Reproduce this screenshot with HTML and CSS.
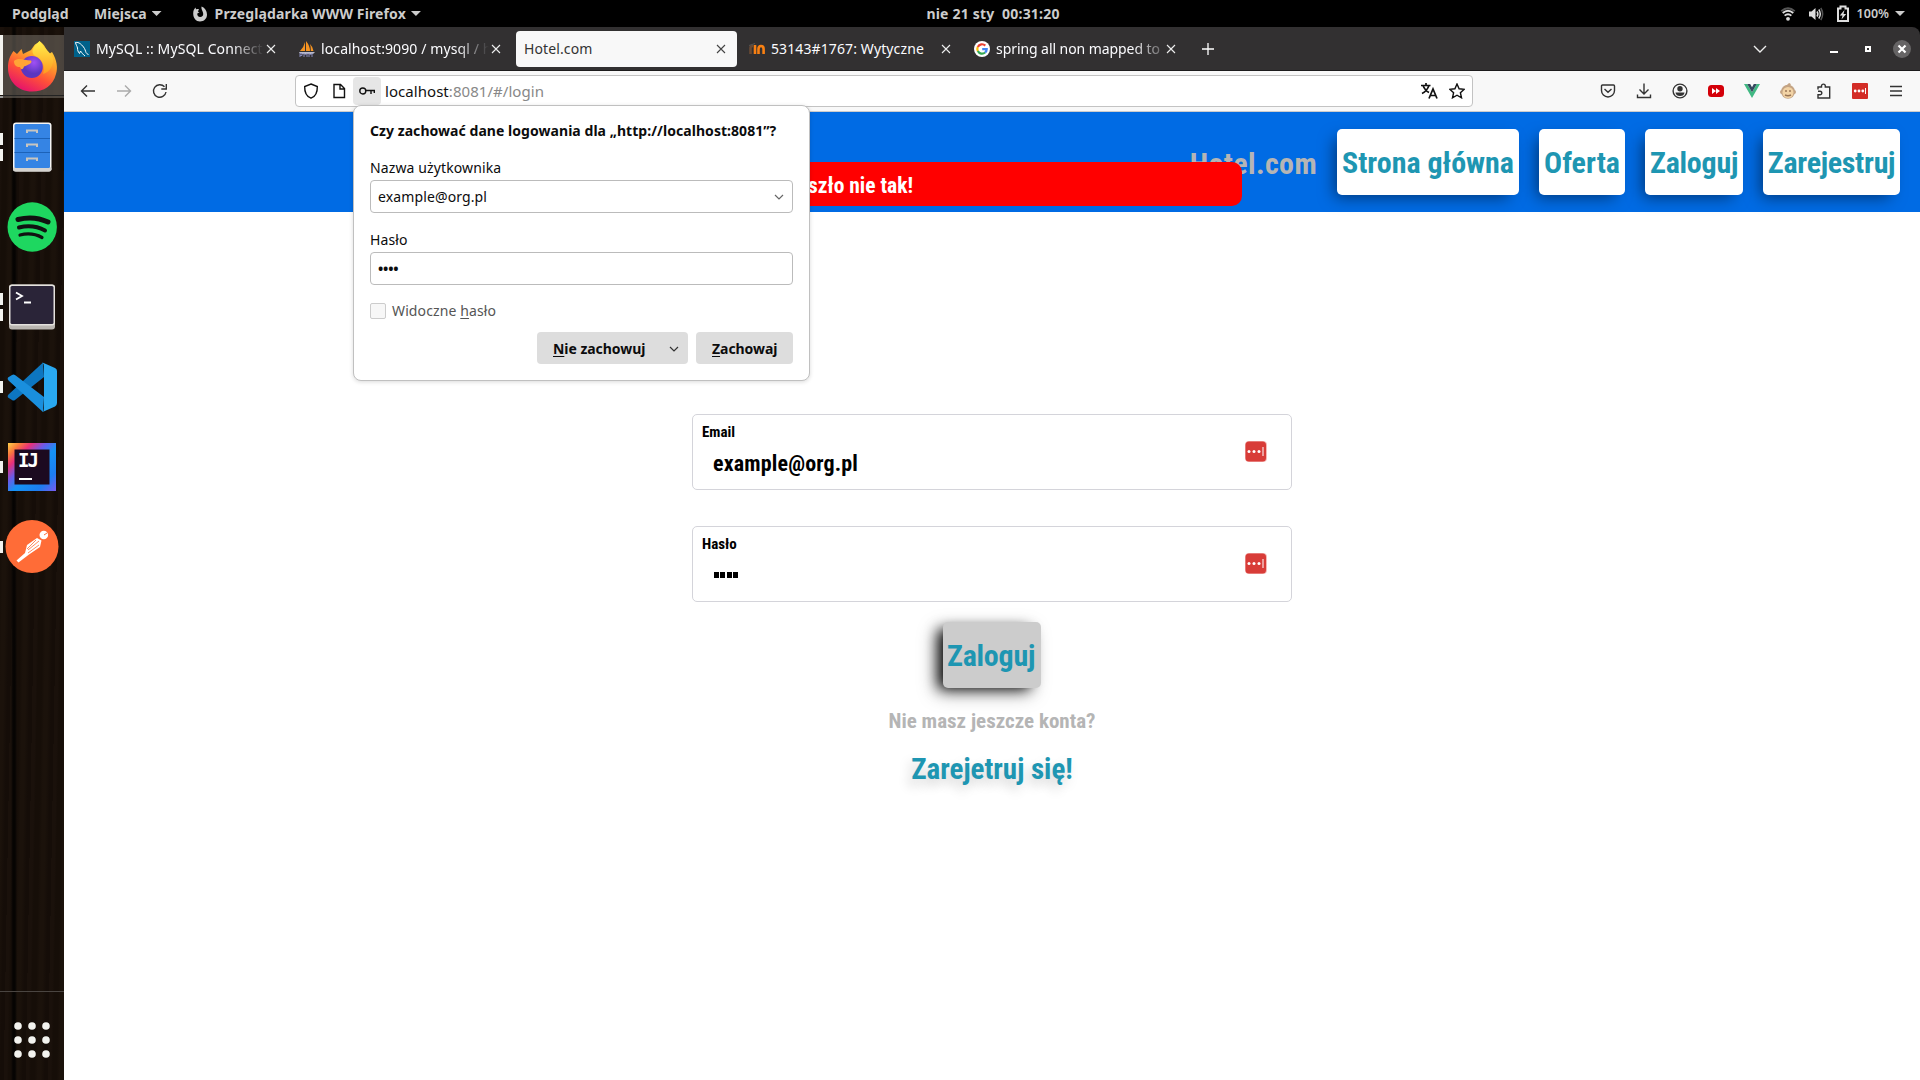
FILE: index.html
```
<!DOCTYPE html>
<html lang="pl">
<head>
<meta charset="utf-8">
<title>Hotel.com</title>
<link rel="stylesheet" href="styles.css">
</head>
<body>
<header class="topbar">
  <div class="topbar-left">
    <span class="activities">Podgląd</span>
    <span class="places">Miejsca</span><i class="tri"></i>
    <svg class="fx-mono" width="16" height="16" viewBox="0 0 16 16"><path d="M1.2 7.5C1.2 5 2 3 3.6 1.6L4 3.6C5 3 6 3 7 3.4L5.8 5.6L7.5 6.2L5.3 7.6C5 9.5 6.3 11 8.2 11C10.2 11 11.3 9.6 11.2 8C11.1 5 8.8 3.5 9.6.6C13 2 15 5 15 8.6C15 13 12 15.5 8 15.5C4 15.5 1.2 12 1.2 7.5Z" fill="#ccc"/></svg>
    <span class="app-name">Przeglądarka WWW Firefox</span><i class="tri"></i>
  </div>
  <div class="clock">nie 21 sty&nbsp; 00:31:20</div>
  <div class="topbar-right">
    <svg width="16" height="16" viewBox="0 0 16 16" fill="none" stroke="#ddd" stroke-width="1.8"><path d="M1.2 5.2Q8-.8 14.8 5.2" stroke="#555"/><path d="M2.7 7Q8 2.4 13.3 7M4.6 9.6Q8 6.8 11.4 9.6"/><circle cx="8" cy="12.8" r="1.9" fill="#ddd" stroke="none"/></svg>
    <svg width="16" height="16" viewBox="0 0 16 16" fill="none" stroke="#ddd" stroke-width="1.5"><path d="M1 5.5h2.5L7.5 2v12L3.500 10.500H1Z" fill="#ddd" stroke="none"/><path d="M9 5.500Q10.800 8 9 10.500M10.800 3.500Q13.800 8 10.800 12.500"/><path d="M12.800 2Q16.500 8 12.800 14" stroke="#555"/></svg>
    <svg width="14" height="18" viewBox="0 0 14 18"><path d="M2 3.500h2.500v-2h5v2H12V16H2Z" fill="none" stroke="#ddd" stroke-width="2"/><path d="M8.500 5L3.800 10.500H6.500L5.500 14.500L10.200 9H7.500Z" fill="#ddd"/></svg>
    <span class="percent">100%</span><i class="tri"></i>
  </div>
</header>

<div class="desktop">
  <aside class="dock">
    <svg width="64" height="80" viewBox="0 27 64 80">
      <defs>
        <linearGradient id="fxa" x1=".8" y1="0" x2=".3" y2="1"><stop offset="0" stop-color="#ffe23f"/><stop offset=".35" stop-color="#ffa22a"/><stop offset=".65" stop-color="#ff5138"/><stop offset="1" stop-color="#e4106e"/></linearGradient>
        <linearGradient id="fxb" x1="0" y1="0" x2="0" y2="1"><stop offset="0" stop-color="#fff14c"/><stop offset="1" stop-color="#ff9a1f"/></linearGradient>
        <radialGradient id="fxc" cx=".6" cy=".3"><stop offset="0" stop-color="#a050f5"/><stop offset="1" stop-color="#5a36c0"/></radialGradient>
      </defs>
      <rect x="3" y="35" width="61" height="63" fill="#807a72" opacity=".5"/>
      <rect x="3" y="95" width="61" height="1" fill="#222"/>
      <rect x="0" y="35" width="3" height="60" fill="#f3f3ef"/><rect x="0" y="96" width="3" height="2" fill="#999"/>
      <path d="M13.500 51L17 54L21.500 49L23 54L31 50L34.500 45C38 42 39 43 39.500 41C45 45 46 49 49 54L52 52C57 60 58 68 56 74C53 86 44 91.500 32 91.500C18 91.500 8 81 8 68C8 60 10 56 13.500 51Z" fill="url(#fxa)"/>
      <path d="M39.500 41C33 47 30 52 35 56C42 59 46 66 43 74C50 72 54 65 53 58C51 53 44 48 39.500 41Z" fill="url(#fxb)"/>
      <circle cx="31.800" cy="67" r="11" fill="url(#fxc)"/>
      <path d="M14 61C18 57 24 60 31 60.500C33 63 28 65 24 66.500C23 70 21 70 20 67C16 67 14 65 14 61Z" fill="#ffa436"/>
    </svg>
    <svg width="64" height="80" viewBox="0 107 64 80">
      <path d="M0 133h3v12H0ZM0 149h3v12H0Z" fill="#f3f3ef"/>
      <rect x="13" y="122.500" width="38.500" height="49" rx="3" fill="#f6f5f4"/><rect x="13" y="167" width="38.500" height="4.500" rx="2" fill="#d5d3d0"/>
      <rect x="14.500" y="124" width="35.500" height="44" rx="1.500" fill="#3584e4"/>
      <path d="M14.500 138.500h35.500M14.500 152.500h35.500" stroke="#1c62b8"/>
      <path d="M27 133v-2.500h10v2.500M27 147v-2.500h10v2.500M27 161v-2.500h10v2.500" fill="none" stroke="#c8c5c0" stroke-width="2"/>
    </svg>
    <svg width="64" height="80" viewBox="0 187 64 80">
      <circle cx="32.200" cy="227" r="24.700" fill="#1ed760"/>
      <g fill="none" stroke="#111" stroke-linecap="round"><path d="M18 219.500Q34 215.500 48 222" stroke-width="5"/><path d="M19 227.500Q33 224 45 230.500" stroke-width="4"/><path d="M20 235Q32 232 42 237.500" stroke-width="3.200"/></g>
    </svg>
    <svg width="64" height="80" viewBox="0 267 64 80">
      <path d="M0 293h3v12H0ZM0 309h3v12H0Z" fill="#f3f3ef"/>
      <rect x="9" y="284.500" width="46" height="45" rx="3" fill="#b9b5b0"/><rect x="9" y="284.500" width="46" height="41" rx="3" fill="#e4e1dd"/>
      <rect x="10.500" y="286" width="43" height="38" rx="1.500" fill="#2a2438"/>
      <path d="M16 292.500L22 296L16 299.500M24 302.500H31" fill="none" stroke="#fff" stroke-width="1.800"/>
    </svg>
    <svg width="64" height="80" viewBox="0 347 64 80">
      <path d="M0 381h3v12H0Z" fill="#f3f3ef"/>
      <path d="M8 397.500Q7 396 8.500 394.500L43 362.500L44 377L15 400Q13.500 401 12 400Z" fill="#0d76c0"/>
      <path d="M8 377.500Q7 379 8.500 380.500L43 412L44 397L15 375Q13.500 374 12 375Z" fill="#1a8fdd"/>
      <path d="M42.500 362.500L55 368Q57 369 57 371V403Q57 405 55 406.500L42.500 412Q44 411 44 408V366.500Q44 364 42.500 362.500Z" fill="#29a8f0"/>
    </svg>
    <svg width="64" height="80" viewBox="0 427 64 80">
      <defs><linearGradient id="ija" x1="0" y1="0" x2="1" y2="1"><stop offset="0" stop-color="#ffd24a"/><stop offset=".13" stop-color="#fa7a3c"/><stop offset=".25" stop-color="#e8307a"/><stop offset=".4" stop-color="#6a5be8"/><stop offset=".55" stop-color="#1593f5"/><stop offset=".8" stop-color="#1d7df0"/><stop offset="1" stop-color="#7a5af0"/></linearGradient></defs>
      <path d="M0 461h3v12H0Z" fill="#f3f3ef"/>
      <rect x="8" y="443" width="48" height="48" fill="url(#ija)"/><rect x="14.500" y="449.500" width="35" height="35" fill="#1c0a20"/>
      <text x="18" y="467" class="ij">IJ</text><rect x="19" y="478" width="13" height="2" fill="#fff"/>
    </svg>
    <svg width="64" height="80" viewBox="0 507 64 80">
      <path d="M0 541h3v12H0Z" fill="#f3f3ef"/>
      <circle cx="32" cy="546.500" r="26.500" fill="#ff6c37"/>
      <circle cx="43.800" cy="535" r="4.300" fill="#fff"/><path d="M44 535l3-2" stroke="#ff6c37"/>
      <path d="M37 538L41.500 540.500L40 547L29 554.500L18.500 562.500L16.500 560.500L25 553L27 545Z" fill="#fff"/><path d="M39 541L28 550M39 545L28 553M36 540L27 549" stroke="#ff6c37" stroke-width=".8"/>
    </svg>
    <svg class="apps" width="64" height="89" viewBox="0 991 64 89">
      <path d="M0 991.500H64" stroke="#4a4541"/>
      <g fill="#f3f3ef"><circle cx="18" cy="1026" r="3.800"/><circle cx="32" cy="1026" r="3.800"/><circle cx="46" cy="1026" r="3.800"/><circle cx="18" cy="1040" r="3.800"/><circle cx="32" cy="1040" r="3.800"/><circle cx="46" cy="1040" r="3.800"/><circle cx="18" cy="1054" r="3.800"/><circle cx="32" cy="1054" r="3.800"/><circle cx="46" cy="1054" r="3.800"/></g>
    </svg>
  </aside>

  <div class="window">
    <div class="tabstrip">
      <div class="tab">
        <svg width="16" height="16" viewBox="0 0 16 16"><rect width="16" height="16" fill="#00618a"/><path d="M1.500 1.500C5 1 7 3 9.500 6C11 8 11.500 10 12 11.500L14.500 14M1.500 1.500C2 4 3 5 3.500 7C3.500 9 4 11 5.500 12.500L6.500 10C8 12 9 13.500 11 15" fill="none" stroke="#fff"/></svg>
        <span class="tab-title fade">MySQL :: MySQL Connector</span>
        <svg class="x" viewBox="0 0 10 10"><path d="M1 1L9 9M9 1L1 9"/></svg>
      </div>
      <div class="tab">
        <svg width="16" height="16" viewBox="0 0 16 16"><path d="M6 1V10H1Q5 6 6 1ZM7 0Q11 5 11 10H7ZM11 3Q14 6 14.500 10H11.800Q12 6 11 3Z" fill="#f79421"/><path d="M0 11H16L14 13H1Z" fill="#b9b9c9"/><path d="M1 16V12.500H3V14.500H1M5 16V12.500L6.500 14L8 12.500V16M10 16V12.500L11.500 14L13 12.500V16" fill="none" stroke="#8587b8"/></svg>
        <span class="tab-title fade">localhost:9090 / mysql / hotel</span>
        <svg class="x" viewBox="0 0 10 10"><path d="M1 1L9 9M9 1L1 9"/></svg>
      </div>
      <div class="tab active">
        <span class="tab-title">Hotel.com</span>
        <svg class="x" viewBox="0 0 10 10"><path d="M1 1L9 9M9 1L1 9"/></svg>
      </div>
      <div class="tab">
        <svg width="16" height="16" viewBox="0 0 16 16" fill="none" stroke="#f98012" stroke-width="2.600"><path d="M1.500 13V7Q1.500 5 4 5" stroke="#6a4a34"/><path d="M6 13V4"/><path d="M9.500 13V8Q9.500 5 12 5T14.600 8V13"/><path d="M0 4.500L6 2.500" stroke="#555" stroke-width="1"/></svg>
        <span class="tab-title">53143#1767: Wytyczne</span>
        <svg class="x" viewBox="0 0 10 10"><path d="M1 1L9 9M9 1L1 9"/></svg>
      </div>
      <div class="tab last">
        <svg width="16" height="16" viewBox="0 0 16 16" fill="none" stroke-width="2.200"><circle cx="8" cy="8" r="8" fill="#fff"/><path d="M11.300 4.600A4.700 4.700 0 0 0 3.800 5.900" stroke="#ea4335"/><path d="M3.800 5.900A4.700 4.700 0 0 0 3.800 10.100" stroke="#fbbc05"/><path d="M3.800 10.100A4.700 4.700 0 0 0 11.100 11.500" stroke="#34a853"/><path d="M11.100 11.500A4.700 4.700 0 0 0 12.700 8.100H8.200" stroke="#4285f4"/></svg>
        <span class="tab-title fade-short">spring all non mapped to</span>
        <svg class="x" viewBox="0 0 10 10"><path d="M1 1L9 9M9 1L1 9"/></svg>
      </div>
      <svg class="plus" width="14" height="14" viewBox="0 0 14 14"><path d="M7 1V13M1 7H13" stroke="#fff" stroke-width="1.300"/></svg>
      <div class="window-controls">
        <svg width="14" height="8" viewBox="0 0 14 8"><path d="M1 1L7 7L13 1" fill="none" stroke="#eee" stroke-width="1.400"/></svg>
        <svg class="min" width="8" height="8" viewBox="0 0 8 8"><path d="M0 7H8" stroke="#fff" stroke-width="2"/></svg>
        <svg class="max" width="6" height="6" viewBox="0 0 6 6"><path d="M1 1H5V5H1Z" fill="none" stroke="#fff" stroke-width="2"/></svg>
        <svg width="18" height="18" viewBox="0 0 18 18"><circle cx="9" cy="9" r="9" fill="#666465"/><path d="M5.500 5.500L12.500 12.500M12.500 5.500L5.500 12.500" stroke="#fff" stroke-width="2.200"/></svg>
      </div>
    </div>

    <div class="toolbar">
      <div class="nav-icons">
        <svg width="16" height="16" viewBox="0 0 16 16"><path d="M15 8H1.500M7 2.500L1.500 8L7 13.500"/></svg>
        <svg class="dim" width="16" height="16" viewBox="0 0 16 16"><path d="M1 8H14.500M9 2.500L14.500 8L9 13.500"/></svg>
        <svg width="16" height="16" viewBox="0 0 16 16"><path d="M14 9A6.300 6.300 0 1 1 12.500 3.800M14.300 1V6H9.300" /></svg>
      </div>
      <div class="urlbar">
        <svg width="16" height="16" viewBox="0 0 16 16"><path d="M8 1L14.300 3.500C14.500 9 12.500 13.500 8 15.200C3.500 13.500 1.500 9 1.700 3.500Z"/></svg>
        <svg width="16" height="16" viewBox="0 0 16 16"><path d="M3 1.500H9.500L13.500 5.500V14.500H3ZM9 1.500V6H13.500"/></svg>
        <span class="key"><svg width="16" height="16" viewBox="0 0 16 16"><circle cx="3.800" cy="8" r="3"/><path d="M7 7.500H16M12 7.500V11M15.300 7.500V10"/></svg></span>
        <span class="url"><b>localhost</b>:8081/#/login</span>
        <svg class="translate" width="17" height="16" viewBox="0 0 17 16"><path d="M0 2.500H9.500M5 0V2.500M8 2.500Q6 8 1 10.500M2 2.500Q4 7.500 8 9.500M8 15.500L12 6L16 15.500M9.300 12.500H14.700" stroke-width="1.700"/></svg>
        <svg width="16" height="16" viewBox="0 0 16 16"><path d="M8 1L10.100 5.800L15.200 6.300L11.400 9.700L12.500 14.800L8 12.200L3.500 14.800L4.600 9.700L.8 6.300L5.900 5.800Z"/></svg>
      </div>
      <div class="ext-icons">
        <svg width="16" height="16" viewBox="0 0 16 16"><path d="M2.500 2H13.500Q14.500 2 14.500 3V7.500A6.500 6.500 0 0 1 1.500 7.500V3Q1.500 2 2.500 2ZM4.500 6L8 9.300L11.500 6"/></svg>
        <svg width="16" height="16" viewBox="0 0 16 16"><path d="M8 .5V10.500M3.500 6.500L8 11L12.500 6.500M1.500 11.500V14.500H14.500V11.500"/></svg>
        <svg width="16" height="16" viewBox="0 0 16 16"><circle cx="8" cy="8" r="6.900"/><circle cx="8" cy="5.800" r="2.700" fill="#333" stroke="none"/><path d="M3.500 9.500H12.500Q12 13 8 13T3.500 9.500Z" fill="#333" stroke="none"/></svg>
        <svg width="16" height="16" viewBox="0 0 16 16"><rect y="2" width="16" height="12" rx="3.500" fill="#d40009" stroke="none"/><path d="M4 5L8 8L4 11ZM8 5L12 8L8 11Z" fill="#fff" stroke="none"/></svg>
        <svg width="16" height="16" viewBox="0 0 16 16"><path d="M0 1H3.200L8 9.300L12.800 1H16L8 15Z" fill="#41b883" stroke="none"/><path d="M3.200 1H6.200L8 4.200L9.800 1H12.800L8 9.300Z" fill="#35495e" stroke="none"/></svg>
        <svg width="16" height="16" viewBox="0 0 16 16"><g stroke="none"><circle cx="2" cy="9" r="2" fill="#c4a484"/><circle cx="14" cy="9" r="2" fill="#c4a484"/><circle cx="8" cy="8.700" r="7" fill="#c4a484"/><path d="M9 0Q12 1 10 3H6Z" fill="#c4a484"/><ellipse cx="8" cy="9.500" rx="5.500" ry="5.500" fill="#f2d3a5"/></g><path d="M6 7V9M10 7V9M5 12Q8 13.500 11 12" stroke="#987354"/></svg>
        <svg width="16" height="16" viewBox="0 0 16 16"><path d="M2 6.500V4H5.500V3A1.900 1.900 0 0 1 9.300 3V4H13.700V15H2V11.800H4A1.800 1.800 0 0 0 4 8.200H2"/></svg>
        <svg width="16" height="16" viewBox="0 0 16 16"><rect width="16" height="16" rx="1" fill="#d32d27" stroke="none"/><g fill="#fff" stroke="none"><circle cx="3.200" cy="8" r="1.400"/><circle cx="7" cy="8" r="1.400"/><circle cx="10.800" cy="8" r="1.400"/><rect x="13" y="5" width="1" height="6"/></g></svg>
        <svg width="16" height="16" viewBox="0 0 16 16"><path d="M2 3.500H14M2 8H14M2 12.500H14"/></svg>
      </div>
    </div>

    <main class="page">
      <nav class="site-nav">
        <span class="brand">Hotel.com</span>
        <a class="nav-btn w-home">Strona główna</a>
        <a class="nav-btn w-offer">Oferta</a>
        <a class="nav-btn w-login">Zaloguj</a>
        <a class="nav-btn w-register">Zarejestruj</a>
      </nav>
      <div class="toast">Coś poszło nie tak!</div>
      <form class="login">
        <div class="field">
          <div><label>Email</label><div class="value">example@org.pl</div></div>
          <svg width="22" height="22" viewBox="0 0 22 22"><rect width="22" height="21" rx="4" fill="#f4b9b6"/><rect x=".5" y=".5" width="20.500" height="20" rx="3.500" fill="#d83c38"/><g fill="#fff"><circle cx="4" cy="10.500" r="1.500"/><circle cx="9" cy="10.500" r="1.500"/><circle cx="14" cy="10.500" r="1.500"/><rect x="17.500" y="6" width="1" height="9"/></g></svg>
        </div>
        <div class="field">
          <div><label>Hasło</label><div class="mask"><i></i><i></i><i></i><i></i></div></div>
          <svg width="22" height="22" viewBox="0 0 22 22"><rect width="22" height="21" rx="4" fill="#f4b9b6"/><rect x=".5" y=".5" width="20.500" height="20" rx="3.500" fill="#d83c38"/><g fill="#fff"><circle cx="4" cy="10.500" r="1.500"/><circle cx="9" cy="10.500" r="1.500"/><circle cx="14" cy="10.500" r="1.500"/><rect x="17.500" y="6" width="1" height="9"/></g></svg>
        </div>
        <div class="submit">Zaloguj</div>
        <p class="hint">Nie masz jeszcze konta?</p>
        <a class="signup">Zarejetruj się!</a>
      </form>
    </main>
  </div>
</div>

<section class="popup">
  <h2>Czy zachować dane logowania dla „http://localhost:8081”?</h2>
  <div class="p-label">Nazwa użytkownika</div>
  <div class="p-input"><span>example@org.pl</span><svg width="10" height="6" viewBox="0 0 10 6"><path d="M1 1L5 5L9 1" fill="none" stroke="#666" stroke-width="1.200"/></svg></div>
  <div class="p-label second">Hasło</div>
  <div class="p-input dots">••••</div>
  <div class="p-check"><i></i><span>Widoczne <u>h</u>asło</span></div>
  <div class="p-buttons">
    <div class="p-btn split"><span><u>N</u>ie zachowuj</span><svg width="10" height="6" viewBox="0 0 10 6"><path d="M1 1L5 5L9 1" fill="none" stroke="#333" stroke-width="1.200"/></svg></div>
    <div class="p-btn"><span><u>Z</u>achowaj</span></div>
  </div>
</section>
</body>
</html>
```
FILE: styles.css
```
* { box-sizing: border-box; }
body { margin: 0; width: 1920px; height: 1080px; overflow: hidden; background: #000; font: 14px/20px "Noto Sans", sans-serif; position: relative; }
svg { display: block; flex: none; }

.topbar { height: 27px; display: grid; grid-template-columns: 1fr auto 1fr; align-items: center; color: #ccc; font-weight: 700; }
.topbar-left, .topbar-right { display: flex; align-items: center; }
.topbar-left { padding-left: 12px; }
.topbar-right { justify-content: flex-end; padding-right: 15px; }
.activities { width: 82px; }
.tri { width: 10px; height: 5px; background: #ccc; clip-path: polygon(0 0, 100% 0, 50% 100%); margin-left: 5px; }
.fx-mono { margin: 0 7px 0 30px; }
.app-name { letter-spacing: .13px; }
.clock { letter-spacing: .2px; margin-left: 66px; }
.topbar-right svg + svg { margin-left: 12px; }
.percent { font-size: 12.500px; font-weight: 600; margin-left: 7px; }
.topbar-right .tri { margin-left: 6px; }

.desktop { display: flex; height: 1053px; }
.dock { width: 64px; display: flex; flex-direction: column; background: linear-gradient(90deg, transparent 11px, rgba(0,0,0,.75) 13px, rgba(0,0,0,.75) 15px, transparent 17px), repeating-linear-gradient(91deg, #1a110b 0 3px, #160e08 5px 9px, #1b120b 12px 15px, #150d08 19px 22px); }
.apps { margin-top: auto; }
.ij { font: 700 19px "DejaVu Sans Mono", monospace; fill: #fff; letter-spacing: -2px; }

.window { width: 1856px; display: flex; flex-direction: column; }
.tabstrip { height: 44px; background: #323031; border-bottom: 1px solid #1c1b1c; border-top-right-radius: 8px; display: flex; align-items: center; color: #fbfbfe; }
.tab { width: 225px; height: 36px; padding: 0 13px 0 10px; display: flex; align-items: center; gap: 6px; }
.tab.active { width: 221px; margin: 0 2px 0 2px; padding: 0 11px 0 8px; background: #f8f8f8; color: #333; border-radius: 4px; }
.tab-title { flex: 1; white-space: pre; overflow: hidden; letter-spacing: .11px; }
.fade { -webkit-mask-image: linear-gradient(90deg, #000 calc(100% - 32px), transparent); mask-image: linear-gradient(90deg, #000 calc(100% - 32px), transparent); margin-right: -4px; }
.fade-short { letter-spacing: -.07px; -webkit-mask-image: linear-gradient(90deg, #000 calc(100% - 32px), transparent 105%); mask-image: linear-gradient(90deg, #000 calc(100% - 32px), transparent 105%); margin-right: -4px; }
.x { width: 10px; height: 10px; stroke: #eee; stroke-width: 1.100; }
.active .x { stroke: #444; }
.plus { margin-left: 12px; }
.window-controls { margin-left: auto; padding-right: 9px; display: flex; align-items: center; }
.min { margin-left: 63px; margin-right: 27px; }
.max { margin-right: 22px; }

.toolbar { height: 41px; background: #f8f8f8; border-bottom: 1px solid #ccc; display: flex; align-items: center; }
.toolbar svg { fill: none; stroke: #333; stroke-width: 1.400; }
.toolbar .dim { stroke: #aaa; }
.nav-icons { display: flex; gap: 20px; padding-left: 16px; width: 231px; }
.urlbar { width: 1178px; height: 32px; background: #fff; border: 1px solid #c3c3c3; border-radius: 4px; display: flex; align-items: center; padding: 0 7px; gap: 12px; }
.urlbar svg { stroke: #111; }
.key { width: 28px; height: 28px; display: grid; place-items: center; background: #e6e6e6; border-radius: 4px; margin: 0 -8px 0 -6px; }
.url { flex: 1; font-size: 15px; letter-spacing: .05px; color: #888; }
.url b { font-weight: 400; color: #111; }
.translate { margin-right: -1px; }
.ext-icons { margin-left: auto; padding-right: 16px; display: flex; gap: 20px; }

.page { flex: 1; background: #fff; position: relative; font-family: Roboto, sans-serif; font-stretch: 75%; font-weight: 700; }
.site-nav { height: 100px; background: #006be4; padding: 0 20px; display: flex; align-items: center; justify-content: flex-end; gap: 20px; font-size: 30px; }
.brand { color: #b5b5b5; padding-top: 3px; letter-spacing: .35px; }
.nav-btn, .submit { height: 66px; padding-top: 1px; border-radius: 5px; background: #fff; color: #1e96b2; display: flex; align-items: center; justify-content: center; white-space: nowrap; box-shadow: -6px 6px 16px -4px rgba(0,0,0,.5); }
.w-home { width: 182px; }
.w-offer { width: 86px; }
.w-login { width: 98px; letter-spacing: -.25px; }
.w-register { width: 137px; letter-spacing: -.3px; }
.toast { position: absolute; left: 678px; top: 50px; width: 500px; height: 44px; border-radius: 10px; background: #f00; color: #fff; font-size: 21.500px; line-height: 48px; padding-left: 7px; }

.login { padding-top: 202px; display: flex; flex-direction: column; align-items: center; }
.field { width: 600px; height: 76px; margin-bottom: 36px; border: 1px solid #d4d4da; border-radius: 5px; padding: 7px 24px 0 9px; display: flex; justify-content: space-between; }
.field label { display: block; font-size: 15px; line-height: 20px; }
.field svg { margin-top: 19px; }
.value { font-size: 22px; line-height: 26px; padding: 9px 0 0 11px; letter-spacing: .15px; }
.mask { display: flex; gap: 1.300px; padding: 18px 0 0 12px; }
.mask i { width: 5px; height: 6px; background: #000; }
.submit { width: 98px; margin-top: -16px; background: #ccc; padding-right: 2px; font-size: 30px; letter-spacing: -.25px; box-shadow: -8px 6px 20px -2px rgba(0,0,0,.4), -8px 4px 14px -4px #000; }
.hint { margin: 20px 0 0; font-size: 21px; line-height: 26px; color: #b5b5b5; }
.signup { margin-top: 18px; font-size: 29px; line-height: 34px; color: #1e96b2; text-shadow: -4px 6px 12px rgba(0,0,0,.18); }

.popup { position: absolute; left: 353px; top: 105px; width: 457px; height: 276px; background: #fff; border: 1px solid #c0c0c0; border-radius: 8px; padding: 15px 16px 0; box-shadow: 0 1px 4px rgba(0,0,0,.15); color: #0c0c0d; letter-spacing: .12px; }
.popup h2 { margin: 0; font-size: 14px; line-height: 20px; letter-spacing: .05px; }
.p-label { margin-top: 17px; height: 22px; }
.second { margin-top: 17px; height: 22px; }
.p-input { height: 33px; border: 1px solid #bbb; border-radius: 4px; padding: 0 8px 0 7px; display: flex; align-items: center; justify-content: space-between; }
.dots { font-weight: 700; letter-spacing: -.2px; }
.p-check { margin-top: 16px; display: flex; align-items: center; gap: 6px; color: #555; }
.p-check i { width: 16px; height: 16px; border: 1px solid #ccc; background: #f7f7f7; border-radius: 2px; }
.p-buttons { margin-top: 11px; display: flex; justify-content: flex-end; gap: 8px; font-weight: 700; letter-spacing: -.05px; }
.p-btn { width: 97px; height: 32px; background: #ddd; border-radius: 4px; padding: 1px 8px 0 16px; display: flex; align-items: center; justify-content: space-between; }
.split { width: 151px; padding-right: 9px; }
u { text-underline-offset: 2px; }
```
